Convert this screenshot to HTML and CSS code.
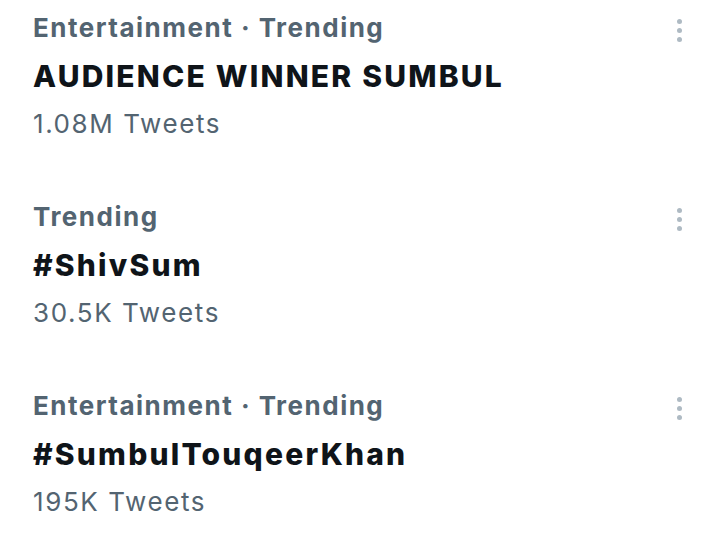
FILE: index.html
```html
<!DOCTYPE html>
<html>
<head>
<meta charset="utf-8">
<link rel="stylesheet" href="styles.css">
</head>
<body>
<div class="list">
  <div class="trend">
    <div class="text">
      <div class="cat">Entertainment · Trending</div>
      <div class="title">AUDIENCE WINNER SUMBUL</div>
      <div class="count">1.08M Tweets</div>
    </div>
    <div class="more"><span></span><span></span><span></span></div>
  </div>
  <div class="trend">
    <div class="text">
      <div class="cat">Trending</div>
      <div class="title">#ShivSum</div>
      <div class="count">30.5K Tweets</div>
    </div>
    <div class="more"><span></span><span></span><span></span></div>
  </div>
  <div class="trend">
    <div class="text">
      <div class="cat">Entertainment · Trending</div>
      <div class="title">#SumbulTouqeerKhan</div>
      <div class="count">195K Tweets</div>
    </div>
    <div class="more"><span></span><span></span><span></span></div>
  </div>
</div>
</body>
</html>
```
FILE: styles.css
```css
html, body { margin: 0; padding: 0; background: #fff; }
body { font-family: Inter, "Noto Sans", sans-serif; }
.list { display: flex; flex-direction: column; gap: 45px; padding: 4px 0 0 33px; }
.trend { display: flex; justify-content: space-between; align-items: flex-start; }
.text { display: flex; flex-direction: column; }
.cat, .title, .count { line-height: 48px; height: 48px; white-space: nowrap; }
.cat { font-size: 26px; font-weight: 700; color: #536471; letter-spacing: 1.5px; }
.title { font-size: 30px; font-weight: 800; color: #0f1419; letter-spacing: 2.2px; }
.count { font-size: 26px; font-weight: 400; color: #536471; letter-spacing: 1.6px; }
.more { display: flex; flex-direction: column; gap: 4px; width: 5px; margin: 15px 22px 0 0; }
.more span { display: block; width: 5px; height: 5px; border-radius: 50%; background: #aebac3; }
```
